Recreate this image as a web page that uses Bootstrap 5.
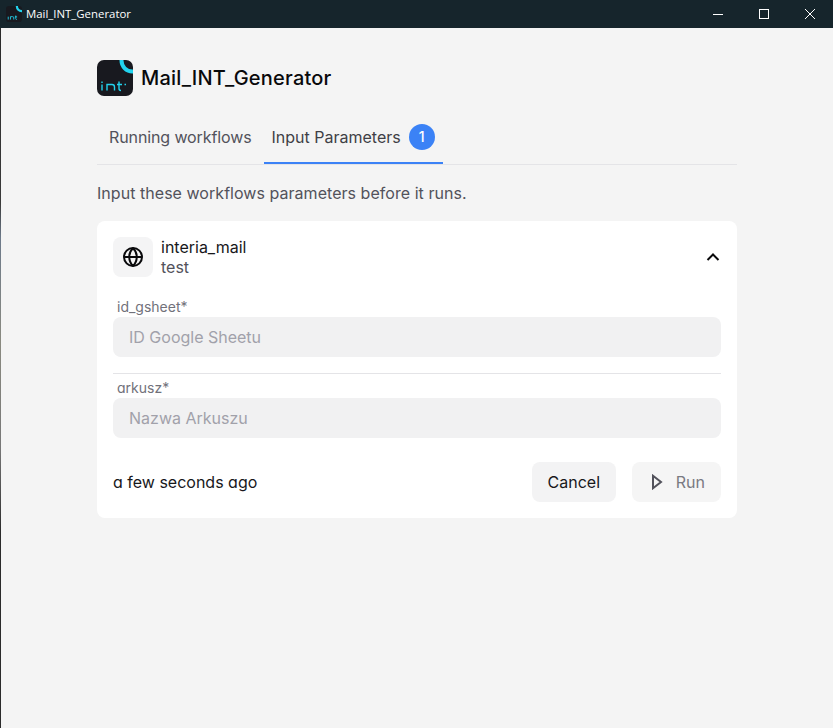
<!DOCTYPE html>
<html lang="en">
<head>
<meta charset="utf-8">
<title>Mail_INT_Generator</title>
<link href="https://cdn.jsdelivr.net/npm/bootstrap@5.3.0/dist/css/bootstrap.min.css" rel="stylesheet">
<style>
html,body{height:100%;}
body{font-family:Inter,"Liberation Sans",sans-serif;background:#f4f4f4;color:#18181b;font-size:16px;line-height:20px;overflow:hidden;}
.win-bar{height:28px;background:#16252c;color:#fff;font-family:"Open Sans","Liberation Sans",sans-serif;font-size:11.4px;padding-left:6px;}
.win-bar svg.ico{width:16px;height:16px;margin-right:4px;}
.win-btn{width:46px;height:28px;}
.win-body{height:700px;}
.edge{width:1px;background:linear-gradient(#2a2a2a 0,#3a3a3a 25%,#6d7a8a 30%,#8a8a80 45%,#777 60%,#2b2b2b 72%,#2b2b2b 100%);}
.page-w{width:640px;margin-left:96px;}
.head-row{padding-top:32px;height:68px;}
.app-title{font-size:20px;font-weight:500;line-height:36px;margin:0 0 0 8px;color:#09090b;letter-spacing:.22px;}
.tab-row{margin-top:14px;height:55px;border-bottom:1px solid #e4e4e7;padding-left:4px;}
.tab-item{padding:0 8px;height:54px;color:#52525b;text-decoration:none;margin-right:4px;letter-spacing:-.11px;}
.tab-on{border-bottom:2px solid #3b82f6;color:#3f3f46;margin-right:0;padding-top:2px;letter-spacing:0;}
.tab-count{width:26px;height:26px;background:#3b82f6;color:#fff;border-radius:50%;font-size:14px;margin-left:8px;font-weight:500;}
.intro{margin:18px 0 18px;color:#52525b;line-height:20px;letter-spacing:.04px;}
.wf-card{background:#fff;border-radius:8px;padding:16px;height:297px;}
.wf-ico{width:40px;height:40px;background:#f4f4f5;border-radius:8px;margin-right:8px;}
.wf-name{color:#18181b;}
.wf-sub{color:#52525b;}
.fld-label{font-size:14px;line-height:20px;color:#71717a;padding-left:4px;margin:0;display:block;}
.fld-input{height:40px;background:#f1f1f2;border:0;border-radius:8px;color:#18181b;font-size:16px;padding:0 16px;box-shadow:none;}
.fld-input::placeholder{color:#a1a1aa;opacity:1;}
.fld-input:focus{background:#f1f1f2;box-shadow:none;}
.sep{margin:16px 0 4px;border:0;border-top:1px solid #e4e4e7;opacity:1;}
.alt-a{font-feature-settings:"cv11";}
.foot-row{margin-top:24px;}
.btn-cancel{height:40px;padding:0 16px;background:#f3f3f4;border:0;border-radius:8px;color:#18181b;font-size:16px;}
.btn-run{height:40px;width:89px;padding:0 16px;background:#f5f5f5;border:0;border-radius:8px;color:#71717a;font-size:16px;margin-left:16px;}
.btn-run:disabled{background:#f5f5f5;color:#7a7a82;opacity:1;}
</style>
</head>
<body>
<div class="win-bar d-flex align-items-center">
  <svg class="ico" viewBox="0 0 36 36"><rect width="36" height="36" rx="7" fill="#18191f"/><path d="M24.500 0a11 11 0 0 0 11.500 11.500" fill="none" stroke="#22d3ee" stroke-width="5"/><path d="M5 24v6.500M10 30.500v-6.500h5q2.500 0 2.500 2.500v4M22 21.500v7q0 2 2 2M20 24.500h5" fill="none" stroke="#22d3ee" stroke-width="2"/></svg>
  <span>Mail_INT_Generator</span>
  <div class="ms-auto d-flex">
    <div class="win-btn d-flex align-items-center justify-content-center"><svg width="10" height="10"><path d="M0 5.500h10" stroke="#fff"/></svg></div>
    <div class="win-btn d-flex align-items-center justify-content-center"><svg width="10" height="10"><rect x=".5" y=".5" width="9" height="9" fill="none" stroke="#fff"/></svg></div>
    <div class="win-btn d-flex align-items-center justify-content-center"><svg width="10" height="10"><path d="M0 0l10 10M10 0L0 10" stroke="#fff"/></svg></div>
  </div>
</div>
<div class="win-body d-flex">
  <div class="edge"></div>
  <div class="page-w">
    <div class="head-row d-flex align-items-start">
      <svg width="36" height="36" viewBox="0 0 36 36"><rect width="36" height="36" rx="7" fill="#18191f"/><path d="M24.500 0a11 11 0 0 0 11.500 11.500" fill="none" stroke="#22d3ee" stroke-width="4"/><path d="M5 21.500v1.500M5 24.500v6M10 30.500v-6h5q2.500 0 2.500 2.500v3.500M22 21.500v7q0 2 2 2M20 24.500h5M27.500 24.500h1.500" fill="none" stroke="#22d3ee" stroke-width="1.400"/></svg>
      <h1 class="app-title">Mail_INT_Generator</h1>
    </div>
    <div class="tab-row d-flex">
      <a class="tab-item d-flex align-items-center" href="#">Running workflows</a>
      <a class="tab-item tab-on d-flex align-items-center" href="#">Input Parameters<span class="tab-count d-inline-flex align-items-center justify-content-center">1</span></a>
    </div>
    <p class="intro">Input these workflows parameters before it runs.</p>
    <div class="wf-card">
      <div class="d-flex align-items-center">
        <div class="wf-ico d-flex align-items-center justify-content-center">
          <svg width="24" height="24" viewBox="0 0 24 24" fill="none" stroke="#09090b" stroke-width="2"><circle cx="12" cy="12" r="9"/><path d="M3 12h18M12 3c-5 5-5 13 0 18M12 3c5 5 5 13 0 18"/></svg>
        </div>
        <div>
          <div class="wf-name">interia_mail</div>
          <div class="wf-sub">test</div>
        </div>
        <svg class="ms-auto" width="16" height="16" viewBox="0 0 16 16" fill="none" stroke="#09090b" stroke-width="2"><path d="M2.500 11l5.500-5.500 5.500 5.500"/></svg>
      </div>
      <label class="fld-label mt-3 pt-1" for="f1">id_gsheet*</label>
      <input id="f1" class="form-control fld-input" placeholder="ID Google Sheetu">
      <hr class="sep">
      <label class="fld-label alt-a" for="f2">arkusz*</label>
      <input id="f2" class="form-control fld-input" placeholder="Nazwa Arkuszu">
      <div class="foot-row d-flex align-items-center">
        <span class="alt-a">a few seconds ago</span>
        <button class="btn btn-cancel ms-auto" type="button">Cancel</button>
        <button class="btn btn-run d-inline-flex align-items-center justify-content-between" type="button" disabled>
          <svg width="16" height="16" viewBox="0 0 16 16" fill="none" stroke="#52525b" stroke-width="2"><path d="M5 1.800v12.400l8-6.200z"/></svg>
          <span>Run</span>
        </button>
      </div>
    </div>
  </div>
</div>
<script src="https://cdn.jsdelivr.net/npm/bootstrap@5.3.0/dist/js/bootstrap.bundle.min.js"></script>
</body>
</html>
